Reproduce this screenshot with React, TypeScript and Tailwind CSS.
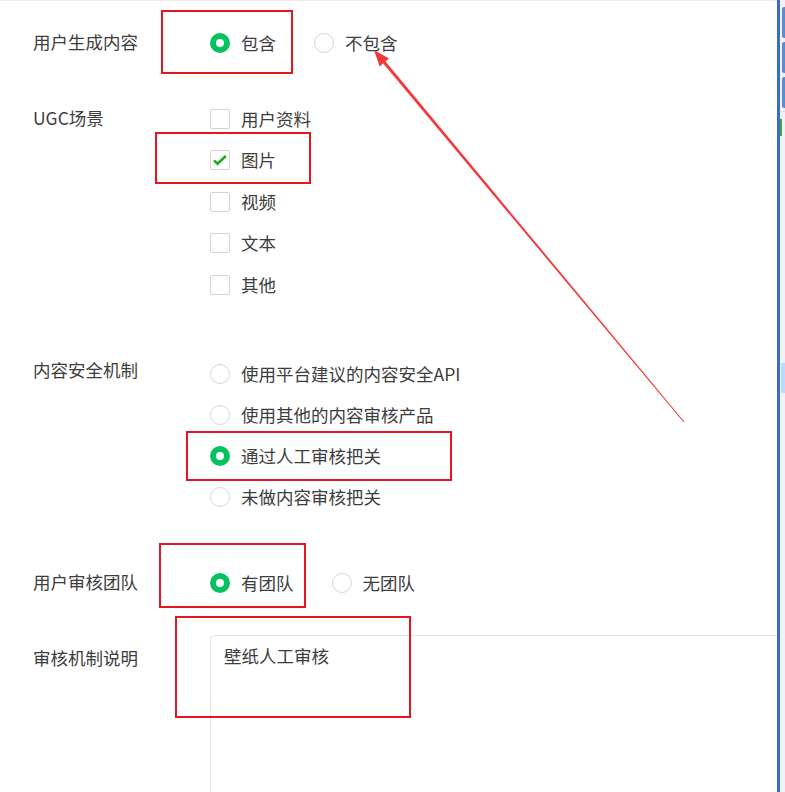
import React from "react";

const font = { fontFamily: '"Noto Sans CJK SC", "Noto Sans", sans-serif' };

const Radio: React.FC<{ checked?: boolean }> = ({ checked }) =>
  checked ? (
    <span className="block w-5 h-5 rounded-full border-[6px] border-[#07c160] bg-white shrink-0" />
  ) : (
    <span className="block w-5 h-5 rounded-full border border-[#d5d5d5] bg-white shrink-0" />
  );

const Checkbox: React.FC<{ checked?: boolean }> = ({ checked }) => (
  <span className="flex w-5 h-5 border border-[#d3d3d3] rounded-[2px] bg-white shrink-0 items-center justify-center">
    {checked && (
      <svg width="20" height="20" viewBox="0 0 20 20" className="-m-px">
        <path d="M4 10.5 L7.6 13.8 L15.8 6" fill="none" stroke="#1aad19" strokeWidth="2.6" />
      </svg>
    )}
  </span>
);

const Option: React.FC<{ label: string; checked?: boolean; box?: boolean; h?: string }> = ({
  label,
  checked,
  box,
  h = "h-[41px]",
}) => (
  <div className={`flex items-center gap-[11px] ${h}`}>
    {box ? <Checkbox checked={checked} /> : <Radio checked={checked} />}
    <span>{label}</span>
  </div>
);

const Label: React.FC<{ text: string; h?: string }> = ({ text, h = "h-[41px]" }) => (
  <div className={`w-[177px] shrink-0 flex items-center ${h}`}>{text}</div>
);

export default function App() {
  return (
    <div
      className="relative flex w-[785px] h-[792px] overflow-hidden bg-white text-[17.5px] text-[#3d3d3d] leading-[26px]"
      style={font}
    >
      <div className="flex-1 overflow-hidden border-t border-[#ececec] pl-[33px] pt-[21px]">
        {/* 用户生成内容 */}
        <div className="flex">
          <Label text="用户生成内容" h="h-[39px]" />
          <div className="flex gap-[38px]">
            <Option label="包含" checked />
            <Option label="不包含" />
          </div>
        </div>

        {/* UGC场景 */}
        <div className="flex mt-[35px] items-start">
          <Label text="UGC场景" h="h-[40px]" />
          <div className="flex flex-col">
            <Option label="用户资料" box h="h-[41.5px]" />
            <Option label="图片" box checked h="h-[41.5px]" />
            <Option label="视频" box h="h-[41.5px]" />
            <Option label="文本" box h="h-[41.5px]" />
            <Option label="其他" box h="h-[41.5px]" />
          </div>
        </div>

        {/* 内容安全机制 */}
        <div className="flex mt-[47.5px] items-start">
          <Label text="内容安全机制" h="h-[33px]" />
          <div className="flex flex-col">
            <Option label="使用平台建议的内容安全API" />
            <Option label="使用其他的内容审核产品" />
            <Option label="通过人工审核把关" checked />
            <Option label="未做内容审核把关" />
          </div>
        </div>

        {/* 用户审核团队 */}
        <div className="flex mt-[45.5px] items-start">
          <Label text="用户审核团队" h="h-[39px]" />
          <div className="flex gap-[38px]">
            <Option label="有团队" checked />
            <Option label="无团队" />
          </div>
        </div>

        {/* 审核机制说明 */}
        <div className="flex mt-[31.5px] items-start">
          <Label text="审核机制说明" h="h-[45px]" />
          <div className="w-[600px] h-[200px] shrink-0 border border-[#e4e4e4] rounded-tl-[4px] pl-[13px] pt-[7px]">
            壁纸人工审核
          </div>
        </div>
      </div>

      {/* right edge of the window */}
      <div className="w-[3px] bg-[#3b6cc0] shrink-0" />
      <div className="w-[5px] bg-[#f2f2f2] shrink-0 flex flex-col">
        <div className="h-[7px]" />
        <div className="ml-[2px] h-[31px] bg-[#5b8bd2] rounded-l-[2px]" />
        <div className="h-[4px]" />
        <div className="ml-[2px] h-[31px] bg-[#5b8bd2] rounded-l-[2px]" />
        <div className="h-[4px]" />
        <div className="ml-[2px] h-[31px] bg-[#5b8bd2] rounded-l-[2px]" />
        <div className="h-[4px] border-b border-[#dcdcdc]" />
        <div className="h-[7px]" />
        <div className="w-[2px] h-[17px] bg-[#3aab4a]" />
        <div className="h-[227px]" />
        <div className="ml-[1px] h-[30px] bg-[#bcdcff]" />
      </div>

      {/* annotations */}
      <div className="absolute left-[161px] top-[10px] w-[132px] h-[64px] border-2 border-[#e5161e]" />
      <div className="absolute left-[155px] top-[132px] w-[156px] h-[52px] border-2 border-[#e5161e]" />
      <div className="absolute left-[186px] top-[431px] w-[266px] h-[50px] border-2 border-[#e5161e]" />
      <div className="absolute left-[159px] top-[543px] w-[147px] h-[65px] border-2 border-[#e5161e]" />
      <div className="absolute left-[175px] top-[616px] w-[236px] h-[102px] border-2 border-[#e5161e]" />
      <svg className="absolute left-0 top-0 pointer-events-none" width="785" height="792">
        <polygon
          points="684.4,421.7 683.6,422.3 383.05,63.26 385.35,61.34"
          fill="#f03a3a"
        />
        <polygon points="374,50 389,58.5 379.6,66.5" fill="#f03a3a" />
      </svg>
    </div>
  );
}
